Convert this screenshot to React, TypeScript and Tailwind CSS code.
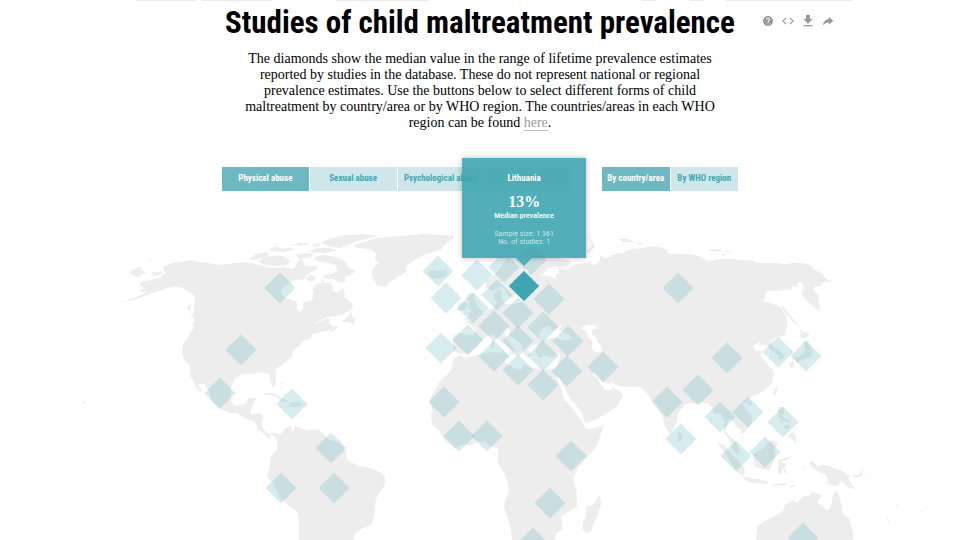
import { useState } from "react";
import { MdCode, MdFileDownload, MdHelp } from "react-icons/md";
import { IoMdShareAlt } from "react-icons/io";

const SANS = "font-['Liberation_Sans_Narrow','Roboto_Condensed','Liberation_Sans',sans-serif]";
const SERIF = "font-['Palatino_Linotype','Liberation_Serif',serif]";

const forms = ["Physical abuse", "Sexual abuse", "Psychological abuse", "Neglect"];
const groupings = ["By country/area", "By WHO region"];

// Each sheet is drawn at three times the map's scale, from its own origin.
const sheets: { x: number; y: number; paths: string[] }[] = [
  {
    // North America and Greenland
    x: 110,
    y: 220,
    paths: [
      "M35,248 L75,233 L110,216 L85,213 L100,205 L88,195 L95,185 L120,181 L150,172 L165,158 L158,140 L190,128 L215,126 L245,120 L262,126 L290,128 L330,135 L370,130 L415,127 L450,136 L480,143 L520,142 L548,148 L556,138 L566,120 L578,118 L582,134 L604,140 L620,136 L622,146 L600,158 L588,166 L584,178 L556,180 L540,188 L516,204 L512,214 L520,230 L540,238 L560,246 L562,270 L570,276 L580,262 L580,248 L600,244 L608,236 L610,214 L606,204 L622,192 L640,187 L662,190 L668,200 L666,212 L682,218 L700,205 L706,234 L726,250 L729,264 L702,282 L682,288 L650,292 L628,302 L610,316 L644,298 L662,294 L656,306 L668,318 L684,318 L660,330 L634,336 L606,342 L602,356 L580,362 L568,378 L550,390 L545,412 L520,432 L497,446 L498,492 L484,492 L480,462 L447,455 L430,460 L400,462 L378,467 L368,492 L252,492 L240,455 L238,434 L222,420 L216,396 L220,372 L235,350 L250,326 L248,310 L256,302 L258,288 L250,282 L252,260 L256,238 L252,224 L240,218 L224,208 L205,200 L188,200 L160,208 L125,220 L80,238 Z",
      "M240,280 L256,284 L268,294 L269,306 L262,310 L252,296 Z M232,256 L243,252 L240,266 L236,274 Z",
      "M58,158 L72,148 L92,138 L96,144 L90,150 L112,156 L98,162 L84,172 L72,166 Z M114,120 L130,119 L122,124 Z M124,158 L150,154 L160,160 L132,170 Z",
      "M735,74 L800,54 L870,48 L940,42 L1010,45 L1035,50 L1015,65 L990,90 L940,105 L900,130 L885,142 L890,156 L840,185 L825,203 L800,196 L785,165 L788,148 L806,128 L794,120 L798,102 L790,92 L770,86 L735,82 Z",
      "M634,68 L660,56 L700,46 L760,43 L808,47 L770,56 L740,64 L710,76 L690,84 L660,80 Z",
      "M590,94 L625,84 L660,84 L684,92 L650,98 L610,98 Z",
      "M416,116 L440,102 L470,96 L478,104 L458,114 L430,120 Z",
      "M446,126 L462,112 L500,106 L528,112 L540,124 L530,136 L500,138 L468,136 Z",
      "M474,88 L500,80 L520,86 L546,82 L550,90 L520,96 L490,94 Z M540,74 L575,68 L604,72 L570,77 Z M606,74 L628,70 L632,78 L612,80 Z",
      "M560,104 L590,98 L612,102 L600,112 L566,116 Z",
      "M612,112 L640,104 L680,112 L706,126 L714,142 L736,154 L722,166 L706,168 L708,184 L694,188 L668,178 L646,176 L640,166 L664,162 L684,152 L676,136 L650,128 L622,124 Z",
      "M586,176 L600,164 L618,172 L612,184 L598,182 Z M630,182 L642,178 L640,188 Z",
      "M696,306 L712,290 L722,276 L728,292 L736,294 L732,314 L718,306 Z M656,334 L674,318 L684,322 L668,336 Z",
    ],
  },
  {
    // Central and South America
    x: 80,
    y: 360,
    paths: [
      "M318,0 L332,15 L330,48 L340,60 L345,78 L360,97 L364,92 L350,68 L342,45 L340,24 L349,24 L360,45 L375,75 L388,95 L392,122 L412,142 L440,155 L450,160 L470,158 L486,168 L500,178 L520,183 L530,196 L532,208 L548,220 L562,232 L570,236 L572,226 L582,226 L592,240 L592,266 L572,290 L568,322 L561,345 L566,356 L580,370 L600,415 L625,436 L652,456 L657,480 L657,545 L822,545 L824,520 L850,504 L874,494 L884,462 L887,416 L905,390 L916,370 L914,348 L898,336 L876,324 L836,318 L800,300 L799,278 L786,254 L768,246 L744,238 L726,216 L705,208 L685,212 L660,205 L650,200 L642,200 L640,215 L634,214 L636,196 L615,205 L605,222 L580,219 L566,222 L548,205 L545,190 L550,168 L536,160 L512,162 L514,144 L528,114 L506,114 L495,132 L465,139 L453,125 L453,85 L462,58 L485,43 L510,42 L524,45 L528,38 L550,36 L568,42 L572,62 L578,80 L586,76 L584,50 L586,24 L600,12 L622,0 Z",
      "M546,105 L560,98 L582,100 L600,110 L624,123 L606,126 L590,112 L568,104 Z",
      "M634,128 L652,126 L666,132 L668,138 L644,140 L622,140 Z M596,139 L606,141 L598,143 Z M674,137 L682,138 L680,143 L674,142 Z",
      "M597,68 L610,67 L608,72 Z M598,82 L604,84 L602,92 Z M711,206 L718,208 L716,214 L711,213 Z",
      "M7,127 L13,124 L15,129 L10,133 Z",
    ],
  },
  {
    // Europe, north Africa and the Middle East
    x: 390,
    y: 220,
    paths: [
      "M190,348 L205,338 L232,344 L252,346 L256,330 L244,316 L224,304 L246,300 L264,288 L290,272 L312,262 L320,250 L312,226 L322,208 L338,212 L334,236 L346,252 L372,252 L396,246 L416,232 L420,214 L440,214 L446,196 L424,192 L404,190 L402,170 L420,150 L404,146 L384,168 L380,190 L384,210 L370,232 L358,234 L344,206 L332,200 L306,212 L288,202 L288,182 L316,162 L340,128 L372,100 L420,82 L460,84 L476,92 L470,104 L486,110 L542,122 L538,136 L520,142 L490,140 L472,146 L462,160 L446,166 L476,168 L500,178 L496,164 L508,158 L506,142 L530,150 L552,134 L600,126 L612,138 L634,120 L660,112 L668,126 L678,150 L682,130 L664,106 L730,96 L730,502 L690,496 L668,484 L656,492 L640,486 L616,458 L608,458 L624,490 L640,500 L648,545 L118,545 L126,524 L150,498 L164,470 L184,450 L190,418 L214,402 L190,394 L188,372 Z",
      "M218,300 L240,298 L274,288 L278,274 L262,258 L252,236 L256,222 L236,218 L226,234 L240,246 L232,262 L244,272 L236,282 L240,288 Z",
      "M200,274 L206,250 L224,244 L232,252 L226,270 Z",
      "M112,158 L124,150 L150,154 L168,150 L174,162 L158,172 L140,177 L122,172 Z",
      "M586,96 L600,84 L606,68 L592,52 L604,60 L616,80 L600,94 L606,100 Z",
    ],
  },
  {
    // Africa and Arabia
    x: 390,
    y: 380,
    paths: [
      "M152,0 L135,30 L120,65 L128,92 L123,108 L126,132 L148,152 L165,182 L195,205 L212,194 L240,196 L270,184 L288,184 L298,200 L322,204 L326,216 L322,246 L345,285 L355,318 L357,336 L344,366 L342,384 L354,412 L362,446 L368,490 L495,490 L498,460 L516,448 L518,424 L512,412 L530,398 L560,380 L560,332 L552,312 L550,290 L566,260 L594,230 L622,194 L642,136 L612,144 L590,148 L578,128 L558,100 L535,70 L515,20 L495,-10 L160,-10 Z",
      "M510,-10 L530,25 L556,72 L578,104 L586,130 L620,118 L652,98 L680,80 L698,50 L690,34 L668,22 L662,30 L645,30 L630,10 L620,-10 Z",
      "M628,345 L635,368 L622,406 L602,455 L588,460 L578,448 L578,428 L588,410 L588,382 L612,372 Z",
    ],
  },
  {
    // Russia and east Asia
    x: 600,
    y: 220,
    paths: [
      "M0,106 L22,118 L36,136 L36,156 L46,150 L34,132 L20,112 L50,108 L48,100 L70,100 L88,88 L130,84 L150,78 L192,84 L206,92 L200,100 L240,102 L280,104 L300,110 L322,122 L340,122 L350,116 L400,118 L460,122 L480,130 L540,130 L552,134 L580,128 L612,130 L632,136 L642,148 L670,164 L674,174 L695,184 L664,188 L660,200 L646,198 L640,208 L654,226 L656,242 L660,276 L646,264 L622,244 L606,226 L606,210 L612,206 L606,186 L590,188 L596,200 L578,198 L574,210 L556,208 L540,212 L500,212 L490,246 L512,250 L540,260 L560,290 L562,318 L552,348 L530,350 L512,364 L520,380 L542,396 L554,408 L550,418 L538,416 L530,402 L510,386 L500,376 L478,376 L482,364 L458,378 L468,392 L490,392 L480,406 L500,430 L521,460 L516,490 L490,514 L452,530 L440,550 L170,550 L130,505 L110,496 L60,500 L30,486 L0,478 Z",
      "M56,57 L80,56 L104,66 L70,66 Z M108,68 L136,70 L120,74 Z M324,88 L360,88 L368,94 L334,94 Z M372,92 L400,94 L380,96 Z M362,102 L382,104 L366,108 Z M594,119 L602,121 L597,124 Z",
      "M540,254 L552,262 L572,288 L600,320 L580,306 L556,280 Z",
      "M596,324 L610,336 L630,342 L622,352 L606,354 L598,348 L604,338 Z",
      "M610,364 L622,362 L634,386 L634,410 L612,418 L590,424 L580,416 L604,406 L616,392 Z M568,430 L580,424 L584,436 L576,446 L570,440 Z M586,424 L598,420 L594,430 Z",
      "M528,500 L532,504 L527,526 L521,518 Z",
    ],
  },
  {
    // South Asia, Indonesia and Australia
    x: 620,
    y: 370,
    paths: [
      "M0,-6 L458,-6 L462,14 L450,44 L425,66 L392,78 L370,82 L360,90 L378,118 L394,134 L396,160 L372,188 L362,192 L364,180 L350,172 L336,150 L326,150 L318,170 L316,186 L334,200 L350,218 L360,248 L350,252 L336,232 L326,206 L310,186 L314,160 L302,128 L282,132 L276,112 L258,92 L250,72 L228,80 L214,92 L196,104 L174,130 L170,156 L154,188 L148,192 L136,170 L128,140 L118,124 L112,104 L96,92 L78,66 L60,50 L0,47 Z",
      "M0,66 L10,74 L0,90 Z",
      "M176,182 L188,200 L182,216 L172,212 Z M383,94 L396,94 L394,108 L384,106 Z M464,54 L471,50 L469,68 L465,78 L461,66 Z",
      "M292,220 L312,224 L340,256 L374,294 L372,320 L352,306 L328,270 L312,246 Z",
      "M370,322 L384,320 L402,328 L418,326 L446,338 L440,342 L400,338 L372,330 Z M454,342 L500,340 L496,346 L460,346 Z M506,354 L516,346 L534,343 L516,352 Z M472,350 L482,353 L476,356 Z",
      "M400,254 L412,246 L430,236 L452,210 L470,216 L472,224 L462,236 L466,256 L458,280 L448,302 L428,296 L404,290 Z",
      "M476,272 L490,264 L520,258 L500,270 L484,276 L498,282 L492,292 L504,314 L494,308 L486,290 L484,316 L476,310 L474,292 Z",
      "M474,112 L490,112 L492,128 L486,140 L500,150 L512,154 L506,158 L486,150 L474,138 Z M480,150 L490,154 L484,160 Z M462,190 L476,172 L470,186 Z M492,168 L508,164 L504,180 L496,176 Z M500,200 L516,186 L528,196 L526,218 L514,204 Z M544,295 L558,294 L548,298 Z",
      "M566,280 L578,272 L592,290 L612,284 L652,296 L676,308 L690,320 L684,326 L698,348 L712,356 L686,354 L666,334 L650,348 L614,340 L626,334 L616,312 L588,302 Z",
      "M696,316 L716,316 L726,304 L718,292 L730,304 L722,320 L706,322 Z M742,314 L752,324 L748,324 Z M782,350 L787,352 L784,355 Z M791,345 L796,348 L792,350 Z M796,355 L798,360 L794,360 Z",
      "M407,515 L412,468 L440,450 L480,430 L488,424 L496,404 L520,390 L532,398 L548,380 L572,376 L574,366 L606,376 L590,396 L610,412 L624,422 L632,408 L640,376 L646,362 L656,374 L664,398 L668,430 L688,448 L694,474 L701,490 L697,515 Z",
      "M797,442 L806,448 L814,462 L804,454 Z M902,420 L912,420 L908,426 Z M912,414 L926,409 L918,416 Z M827,396 L831,400 L829,412 Z",
    ],
  },
];

// Inland and enclosed seas, at the scale and origin of the Europe sheet.
const seas = [
  "M206,403 L236,400 L252,384 L262,384 L264,370 L284,354 L304,342 L318,350 L330,364 L346,376 L360,388 L356,402 L368,406 L376,390 L352,362 L342,336 L350,324 L360,330 L358,344 L382,362 L396,376 L400,402 L412,412 L424,404 L414,388 L428,376 L442,372 L436,394 L446,412 L470,408 L486,414 L508,400 L510,412 L496,448 L474,448 L452,450 L420,440 L402,434 L394,452 L372,444 L344,428 L350,400 L322,396 L288,398 L250,408 L224,414 Z",
  "M446,358 L450,338 L462,320 L480,318 L486,332 L500,326 L520,308 L506,330 L540,346 L546,358 L520,362 L490,352 L462,362 Z",
  "M574,324 L590,314 L614,314 L624,324 L606,330 L606,344 L618,352 L622,364 L634,380 L634,396 L614,396 L604,386 L608,366 L594,350 L588,334 Z",
  "M498,472 L506,470 L520,496 L546,545 L526,545 L512,500 Z",
];
const seaIslands = "M304,364 L312,360 L314,382 L304,386 Z M340,404 L362,406 L356,416 L342,410 Z";

const studies: [number, number][] = [
  [280, 288], [241, 350], [220, 393], [292, 404], [331, 448], [281, 488], [334, 488],
  [438, 271], [477, 275], [504, 267], [531, 260], [446, 298], [473, 308], [497, 295],
  [549, 299], [494, 326], [518, 313], [543, 327], [568, 341], [468, 340], [441, 348],
  [494, 356], [518, 341], [518, 370], [543, 356], [567, 371], [543, 385], [603, 367],
  [444, 402], [459, 436], [487, 436], [571, 456], [550, 503], [533, 543],
  [678, 288], [727, 358], [778, 352], [806, 356], [698, 390], [667, 402], [720, 417],
  [748, 412], [783, 422], [681, 439], [736, 456], [765, 452], [803, 538],
];

function diamond(x: number, y: number) {
  return `M${x},${y - 15.5} l15.5,15.5 l-15.5,15.5 l-15.5,-15.5 Z`;
}

function Segmented({ label, items, groupClass }: { label: string; items: string[]; groupClass: string }) {
  const [selected, setSelected] = useState(items[0]);
  return (
    <div role="group" aria-label={label} className={`flex gap-px ${groupClass}`}>
      {items.map((item) => (
        <button
          key={item}
          type="button"
          aria-pressed={item === selected}
          onClick={() => setSelected(item)}
          className={`h-6 flex-1 whitespace-nowrap text-center text-[9px] font-bold ${
            item === selected ? "bg-[#6cb9c1] text-white" : "bg-[#cfe7ea] text-[#45a6b1]"
          }`}
        >
          {item}
        </button>
      ))}
    </div>
  );
}

function WorldMap() {
  return (
    <svg viewBox="0 191 960 349" className="block w-full" role="img" aria-label="World map of studies">
      <g fill="#ededed">
        {sheets.map((sheet) => (
          <g key={`${sheet.x}-${sheet.y}`} transform={`translate(${sheet.x} ${sheet.y}) scale(0.33333)`}>
            {sheet.paths.map((d) => (
              <path key={d} d={d} />
            ))}
          </g>
        ))}
      </g>
      <g fill="#fff" transform="translate(390 220) scale(0.33333)">
        {seas.map((d) => (
          <path key={d} d={d} />
        ))}
        <path d={seaIslands} fill="#ededed" />
      </g>
      <g fill="#3ea5b1" fillOpacity="0.21">
        {studies.map(([x, y]) => (
          <path key={`${x}-${y}`} d={diamond(x, y)} />
        ))}
      </g>
      <path d={diamond(524, 286)} fill="#3ea5b1" stroke="#fff" strokeWidth="1" strokeDasharray="1 1" />
    </svg>
  );
}

function Tooltip() {
  return (
    <div
      role="tooltip"
      className="absolute left-[54.6%] top-[21.5%] flex -translate-x-1/2 -translate-y-full flex-col items-center"
    >
      <div className="flex h-[100px] w-[124px] flex-col items-center bg-[#3fa5b0]/90 pt-3.5 text-center text-white shadow-[0_0_6px_rgba(0,0,0,0.25)]">
        <p className="text-[9px] leading-3 font-bold">Lithuania</p>
        <p className={`mt-2 text-[16px] leading-5 font-bold ${SERIF}`}>13%</p>
        <p className="text-[8px] leading-2 font-medium">Median prevalence</p>
        <p className="mt-2.5 text-[8px] leading-2 text-white/70">
          Sample size: 1 361
          <br />
          No. of studies: 1
        </p>
      </div>
      <svg viewBox="0 0 16 8" className="h-2 w-4" aria-hidden="true">
        <path d="M0,0 H16 L8,8 Z" fill="#52adb7" />
      </svg>
    </div>
  );
}

const toolClass = "flex size-5 items-center justify-center";

export default function App() {
  return (
    <main className={`overflow-hidden bg-white text-black ${SANS}`}>
      <svg viewBox="0 0 960 2" className="block w-full" aria-hidden="true">
        <path d="M135,0 H196 V1 H135 Z M202,0 H272 V1 H202 Z M336,0 H429 V1 H336 Z M642,0 H655 V1 H642 Z M690,0 H704 V1 H690 Z M725,0 H852 V1 H725 Z" fill="#ececec" />
      </svg>
      <header className="relative mx-auto mt-px w-[516px]">
        <h1 className="flex justify-center whitespace-nowrap pt-0.5 text-[31px] leading-9 font-bold">
          Studies of child maltreatment prevalence
        </h1>
        <div className="absolute top-2 left-full ml-5 flex text-[#999]">
          <button type="button" aria-label="Help" className={toolClass}><MdHelp className="size-3" /></button>
          <button type="button" aria-label="Embed" className={toolClass}><MdCode className="size-3.5" /></button>
          <button type="button" aria-label="Download" className={toolClass}><MdFileDownload className="size-4" /></button>
          <button type="button" aria-label="Share" className={toolClass}><IoMdShareAlt className="size-3.5" /></button>
        </div>
      </header>
      <p className={`mt-2.5 text-center text-[14px] leading-4 ${SERIF}`}>
        The diamonds show the median value in the range of lifetime prevalence estimates
        <br />
        reported by studies in the database. These do not represent national or regional
        <br />
        prevalence estimates. Use the buttons below to select different forms of child
        <br />
        maltreatment by country/area or by WHO region. The countries/areas in each WHO
        <br />
        region can be found{" "}
        <a href="#regions" className="border-b border-[#bbb] text-[#999]">here</a>.
      </p>
      <nav className="mx-auto mt-9 flex w-[516px] justify-between" aria-label="Map filters">
        <Segmented label="Form of maltreatment" items={forms} groupClass="w-[350px]" />
        <Segmented label="Grouping" items={groupings} groupClass="w-[136px]" />
      </nav>
      <section className="relative" aria-label="Map">
        <WorldMap />
        <Tooltip />
      </section>
    </main>
  );
}
